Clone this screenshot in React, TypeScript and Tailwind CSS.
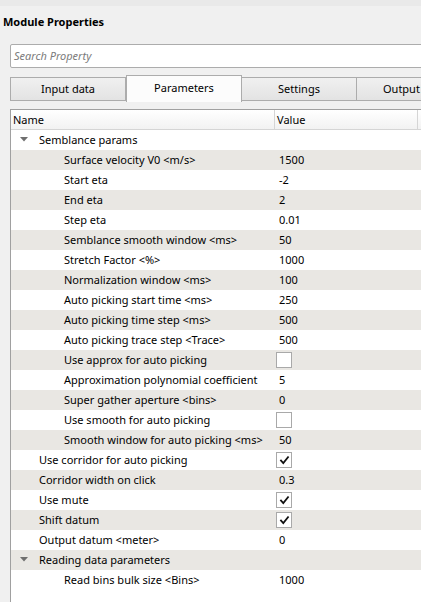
import React from "react";

type Row = {
  name: string;
  value?: string;
  check?: boolean;
  level: 0 | 1;
  group?: boolean;
};

const rows: Row[] = [
  { name: "Semblance params", level: 0, group: true },
  { name: "Surface velocity V0 <m/s>", value: "1500", level: 1 },
  { name: "Start eta", value: "-2", level: 1 },
  { name: "End eta", value: "2", level: 1 },
  { name: "Step eta", value: "0.01", level: 1 },
  { name: "Semblance smooth window <ms>", value: "50", level: 1 },
  { name: "Stretch Factor <%>", value: "1000", level: 1 },
  { name: "Normalization window <ms>", value: "100", level: 1 },
  { name: "Auto picking start time <ms>", value: "250", level: 1 },
  { name: "Auto picking time step <ms>", value: "500", level: 1 },
  { name: "Auto picking trace step <Trace>", value: "500", level: 1 },
  { name: "Use approx for auto picking", check: false, level: 1 },
  { name: "Approximation polynomial coefficient", value: "5", level: 1 },
  { name: "Super gather aperture <bins>", value: "0", level: 1 },
  { name: "Use smooth for auto picking", check: false, level: 1 },
  { name: "Smooth window for auto picking <ms>", value: "50", level: 1 },
  { name: "Use corridor for auto picking", check: true, level: 0 },
  { name: "Corridor width on click", value: "0.3", level: 0 },
  { name: "Use mute", check: true, level: 0 },
  { name: "Shift datum", check: true, level: 0 },
  { name: "Output datum <meter>", value: "0", level: 0 },
  { name: "Reading data parameters", level: 0, group: true },
  { name: "Read bins bulk size <Bins>", value: "1000", level: 1 },
];

const tabs = ["Input data", "Parameters", "Settings", "Output"];

function CheckBox({ on }: { on: boolean }) {
  return (
    <div className="flex h-[16px] w-[16px] items-center justify-center border border-[#a9a9a9] bg-white">
      {on && (
        <svg width="11" height="11" viewBox="0 0 11 11" fill="none">
          <path
            d="M2 5.5l2.3 2.6L9 2.2"
            stroke="#111"
            strokeWidth="1.8"
            strokeLinecap="square"
          />
        </svg>
      )}
    </div>
  );
}

export default function App() {
  return (
    <div className="h-[602px] w-[421px] overflow-hidden bg-[#f0f0f0] font-['Noto_Sans',sans-serif] text-[11px] text-black">
      <div className="h-[6px] bg-[#e9e9e9]" />

      {/* Title */}
      <div className="mt-[8px] h-[16px] pl-[3px] text-[11px] font-bold leading-[16px]">
        Module Properties
      </div>

      {/* Search */}
      <div className="ml-[10px] mt-[14px] flex h-[24px] w-[430px] items-center rounded-[2px] border border-[#acacac] bg-white pl-[3px] italic text-[#7b7b7b]">
        Search Property
      </div>

      {/* Tabs */}
      <div className="mt-[7px] flex h-[26px] items-end pl-[10px]">
        {tabs.map((t) => {
          const active = t === "Parameters";
          const last = t === "Output";
          return active ? (
            <div
              key={t}
              className="relative z-10 -mb-[1px] flex h-[27px] w-[116px] shrink-0 items-center justify-center border border-b-0 border-[#acacac] bg-[#fcfcfc] pb-[1px]"
            >
              {t}
            </div>
          ) : (
            <div
              key={t}
              className={`-ml-px flex h-[24px] shrink-0 items-center border border-[#acacac] bg-gradient-to-b from-[#f0f0f0] to-[#e3e3e3] first:ml-0 ${
                last ? "w-[140px] pl-[26px]" : "w-[116px] justify-center"
              }`}
            >
              {t}
            </div>
          );
        })}
      </div>

      {/* Table */}
      <div className="ml-[10px] mt-[8px] h-[500px] border-l border-t border-[#a0a0a0] bg-white">
        <div className="flex h-[20px] border-b border-[#d5d5d5] bg-gradient-to-b from-white to-[#f2f2f2] leading-[19px]">
          <div className="w-[264px] shrink-0 border-r border-[#d5d5d5] pl-[2px]">
            Name
          </div>
          <div className="w-[143px] shrink-0 border-r border-[#d5d5d5] pl-[2px]">
            Value
          </div>
        </div>

        {rows.map((r, i) => (
          <div
            key={r.name}
            className={`flex h-[20px] items-center ${
              i % 2 === 1 ? "bg-[#e9e7e3]" : "bg-white"
            }`}
          >
            <div
              className={`relative w-[264px] shrink-0 whitespace-nowrap ${
                r.level === 1 ? "pl-[53px]" : "pl-[28px]"
              }`}
            >
              {r.group && (
                <svg
                  className="absolute left-[9px] top-[5px]"
                  width="8"
                  height="5"
                  viewBox="0 0 8 5"
                >
                  <path d="M0 0h8L4 4.5z" fill="#6f6f6f" />
                </svg>
              )}
              {r.name}
            </div>
            <div className="pl-[4px]">
              {r.check !== undefined ? (
                <div className="-ml-[3px]">
                  <CheckBox on={r.check} />
                </div>
              ) : (
                r.value
              )}
            </div>
          </div>
        ))}
      </div>
    </div>
  );
}
